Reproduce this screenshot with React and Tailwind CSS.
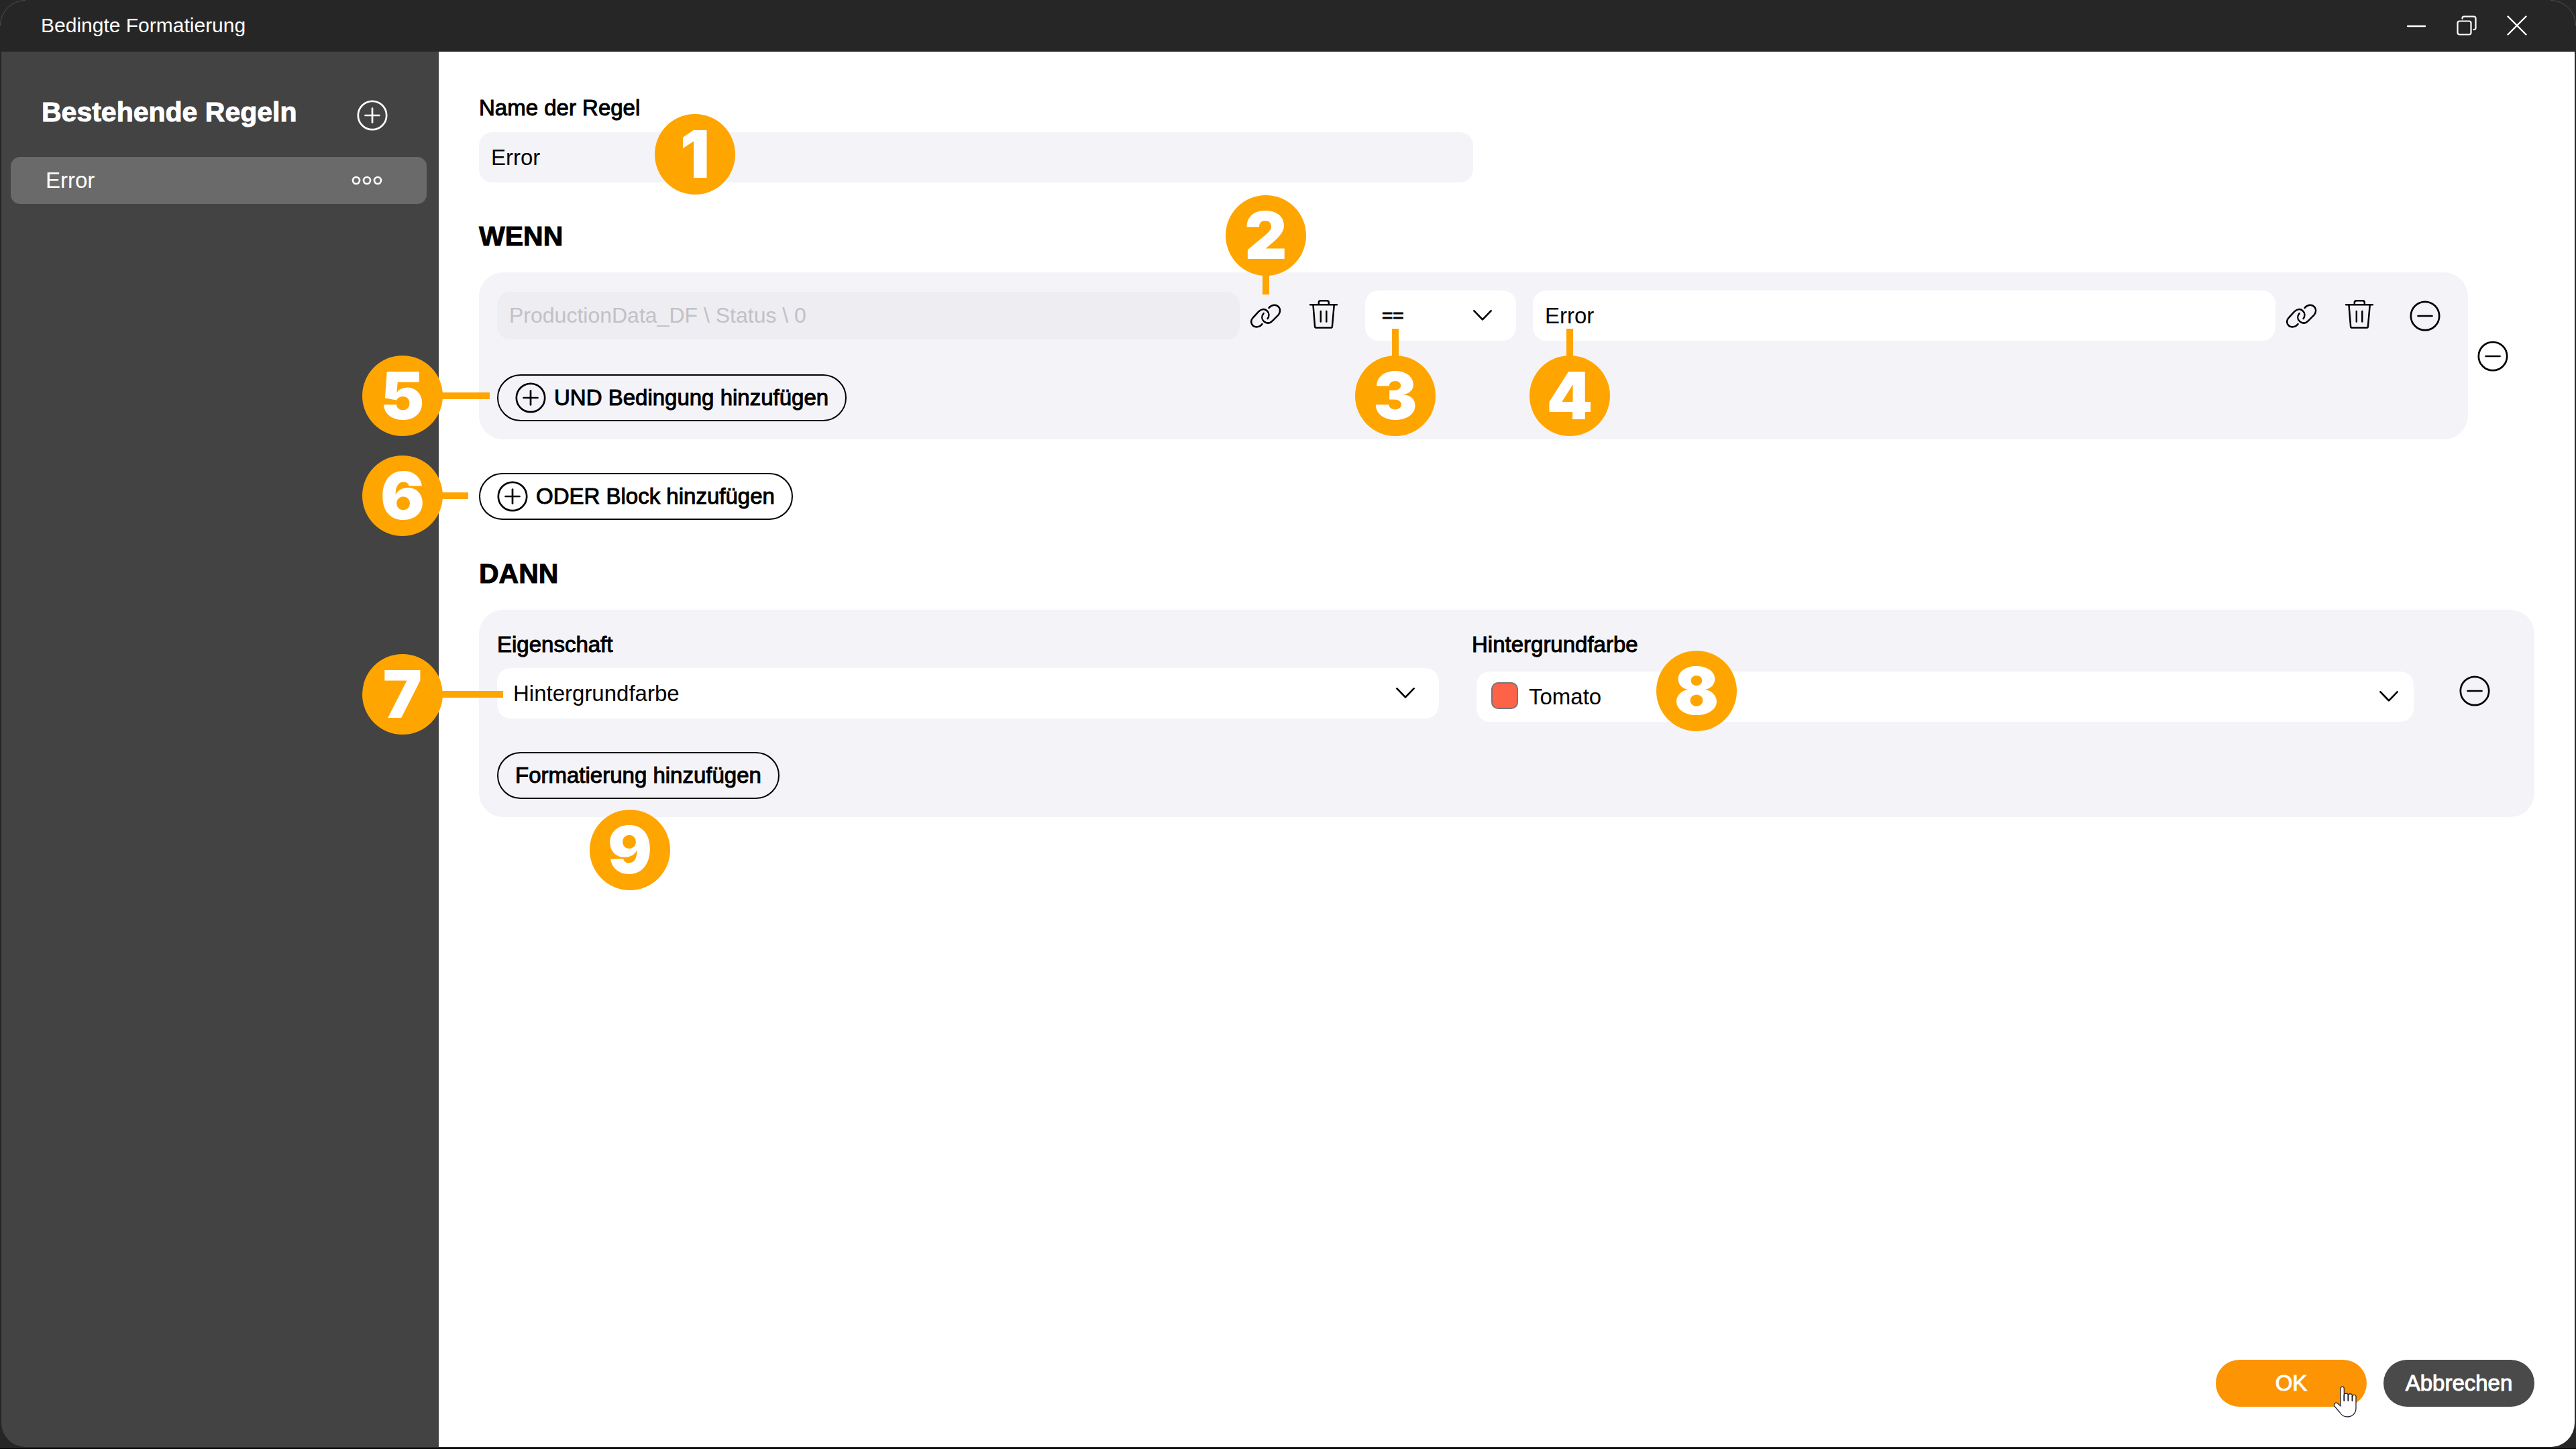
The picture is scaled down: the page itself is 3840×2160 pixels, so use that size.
import React from "react";

const FONT = "font-['Liberation_Sans',Arial,sans-serif]";
const MEDIUM = "text-[33px] leading-10 [-webkit-text-stroke:1px]";
const HEADING = "text-[41px] leading-12 font-bold [-webkit-text-stroke:1px]";
const FIELD = "h-[75px] w-full rounded-[20px] text-[33px] text-black outline-none";

function Badge({ n, className, stem }) {
  return (
    <div className={`pointer-events-none absolute z-10 size-[120px] ${className}`}>
      {stem && <span className={`absolute bg-[#ffa500] ${stem}`} />}
      <span className="relative flex size-full items-center justify-center rounded-full bg-[#ffa500] font-[Inter,sans-serif] text-[98px] leading-none font-black text-white">
        {n}
      </span>
    </div>
  );
}

function CircleIcon({ plus }) {
  return (
    <svg viewBox="0 0 46 46" className="size-[46px] shrink-0" fill="none" stroke="currentColor" strokeWidth="2.7" strokeLinecap="round" aria-hidden="true">
      <circle cx="23" cy="23" r="21.2" />
      <path d="M12.5 23H33.5" />
      {plus && <path d="M23 12.5V33.5" />}
    </svg>
  );
}

function LinkIcon() {
  return (
    <svg viewBox="0 -5 46 46" className="size-[46px]" fill="none" stroke="currentColor" strokeWidth="2.5" strokeLinecap="round" aria-hidden="true">
      <path d="M17.5 30C13.5 35.3 6.2 35.8 3 31.6C0.6 28.2 0.9 24 3.6 20.8L12 11.6C16 7.5 21 7 24.6 10.2C28 13.3 28.3 18 25.6 22" />
      <path d="M27.5 6C31.5 0.8 38.5 0.2 42.2 4.6C45 8 44.6 13 41.7 16.3L33 25.2C29 29.2 24.4 29.5 20.5 26.6C16.6 23.4 16.2 18.4 19.7 14" />
    </svg>
  );
}

function TrashIcon() {
  return (
    <svg viewBox="-2 1 46 46" className="size-[46px] overflow-visible" fill="none" stroke="currentColor" strokeWidth="2.5" strokeLinecap="round" strokeLinejoin="round" aria-hidden="true">
      <path d="M1.2 7.2H40.8" />
      <path d="M13.8 6.5V4C13.8 2 14.8 1.2 16.6 1.2H26C27.8 1.2 28.8 2 28.8 4V6.5" />
      <path d="M5.5 8L8.1 39.6C8.2 41 8.9 41.6 10.2 41.6H31.8C33.1 41.6 33.8 41 33.9 39.6L36.7 8" />
      <path d="M16.8 17V32.5M25.3 17V32.5" />
    </svg>
  );
}

function Chevron({ className }) {
  return (
    <svg viewBox="0 0 28 16" className={`pointer-events-none absolute h-4 w-7 ${className}`} fill="none" stroke="currentColor" strokeWidth="2.7" strokeLinecap="round" strokeLinejoin="round" aria-hidden="true">
      <path d="M1.4 1.4L14 14.4L26.6 1.4" />
    </svg>
  );
}

function IconButton({ label, className = "", children }) {
  return (
    <button type="button" aria-label={label} className={`size-[46px] shrink-0 ${className}`}>
      {children}
    </button>
  );
}

function OutlineButton({ plus, children }) {
  return (
    <button type="button" className={`flex h-[70px] items-center gap-3 rounded-full border-2 border-black px-[25px] whitespace-nowrap text-black ${MEDIUM}`}>
      {plus && <CircleIcon plus />}
      {children}
    </button>
  );
}

function HandCursor() {
  return (
    <svg viewBox="-1 -1 36 48" className="pointer-events-none absolute top-[39px] right-[14px] h-12 w-9" fill="#fff" stroke="#23233a" strokeWidth="1.3" strokeLinecap="round" strokeLinejoin="round" aria-hidden="true">
      <path d="M10 29V3A2.6 2.8 0 0 1 15.3 3V13A3 2.8 0 0 1 21.4 13A3 2.8 0 0 1 27.5 14.5A2.8 2.6 0 0 1 33 15.5V32C33 40 27.5 45 20 45C14.5 45 11 42 8.6 38L1.2 29.5C-1 26 2.5 22.5 6 25.2Z" />
      <path d="M15.3 13V21M21.4 13V21M27.5 14V21" strokeWidth="2" />
    </svg>
  );
}

function TitleBar() {
  return (
    <header className="flex h-[77px] shrink-0 items-center justify-between pr-[73px] pb-0.5 pl-[61px] text-white">
      <h1 className="text-[30px] leading-10">Bedingte Formatierung</h1>
      <div className="flex items-center gap-[45px]">
        <button type="button" aria-label="Minimieren">
          <svg viewBox="0 0 30 30" className="size-[30px]" stroke="currentColor" strokeWidth="2.4" strokeLinecap="round">
            <path d="M2 16H28" />
          </svg>
        </button>
        <button type="button" aria-label="Wiederherstellen">
          <svg viewBox="0 0 30 30" className="size-[30px]" fill="none" stroke="currentColor" strokeWidth="2.2" strokeLinecap="round">
            <rect x="1.5" y="8.5" width="20" height="20" rx="3" />
            <path d="M8.5 4.8V4.2C8.5 2.5 9.5 1.6 11 1.6H25.5C27.5 1.6 28.5 2.6 28.5 4.5V18.5C28.5 20.3 27.5 21.2 25.5 21.2" />
          </svg>
        </button>
        <button type="button" aria-label="Schließen">
          <svg viewBox="0 0 30 30" className="size-[30px]" stroke="currentColor" strokeWidth="2.4" strokeLinecap="round">
            <path d="M1.5 1.5L28.5 28.5M28.5 1.5L1.5 28.5" />
          </svg>
        </button>
      </div>
    </header>
  );
}

function Sidebar() {
  return (
    <aside className="w-[652px] shrink-0 rounded-bl-[36px] bg-[#434343] pt-[66px] text-white">
      <div className="flex h-[52px] items-end justify-between pr-[76px] pl-[60px]">
        <h2 className={`self-start ${HEADING}`}>Bestehende Regeln</h2>
        <IconButton label="Regel hinzufügen">
          <CircleIcon plus />
        </IconButton>
      </div>
      <ul className="mt-[39px] mr-[18px] ml-[14px]">
        <li className="flex h-[70px] items-center justify-between rounded-[14px] bg-[#6a6a6a] pr-[66px] pl-[52px]">
          <span className="text-[33px] leading-10">Error</span>
          <button type="button" aria-label="Weitere Aktionen">
            <svg viewBox="0 0 46 14" className="h-3.5 w-[46px]" fill="none" stroke="currentColor" strokeWidth="2.7">
              <circle cx="7" cy="7" r="5" />
              <circle cx="23" cy="7" r="5" />
              <circle cx="39" cy="7" r="5" />
            </svg>
          </button>
        </li>
      </ul>
    </aside>
  );
}

function WhenBlock() {
  return (
    <div className="mt-[30px] flex items-center gap-3.5 pr-[39px]">
      <div className="min-w-0 flex-1 rounded-[36px] bg-[#f4f3f8] py-[27px] pr-[41px] pl-[27px]">
        <div className="flex items-center">
          <div className="min-w-0 flex-1">
            <input
              disabled
              aria-label="Datenquelle"
              defaultValue="ProductionData_DF \ Status \ 0"
              className="block h-[71px] w-full rounded-[20px] bg-[#eeedf2] px-[18px] text-[32px] text-[#c2c1c5]"
            />
          </div>
          <div className="relative ml-4 flex gap-10">
            <IconButton label="Verknüpfen"><LinkIcon /></IconButton>
            <IconButton label="Löschen"><TrashIcon /></IconButton>
            <Badge n="2" className="bottom-[83px] -left-[37px]" stem="top-[118px] left-[55px] h-[30px] w-2.5" />
          </div>
          <div className="relative mr-[25px] ml-[39px] w-[225px]">
            <select aria-label="Operator" className="block h-[75px] w-full appearance-none rounded-[20px] bg-white px-[25px] text-[28px] [-webkit-text-stroke:1px]">
              <option>==</option>
            </select>
            <Chevron className="top-[29px] right-[36px]" />
            <Badge n="3" className="top-[97px] -left-[15px]" stem="bottom-[118px] left-[55px] h-[42px] w-2.5" />
          </div>
          <div className="relative min-w-0 flex-1">
            <input aria-label="Vergleichswert" defaultValue="Error" className={`block ${FIELD} bg-white px-[18px]`} />
            <Badge n="4" className="top-[97px] -left-[5px]" stem="bottom-[118px] left-[55px] h-[42px] w-2.5" />
          </div>
          <div className="ml-4 flex gap-10">
            <IconButton label="Verknüpfen"><LinkIcon /></IconButton>
            <IconButton label="Löschen"><TrashIcon /></IconButton>
          </div>
          <IconButton label="Bedingung entfernen" className="ml-[52px]"><CircleIcon /></IconButton>
        </div>
        <div className="relative mt-[50px] w-fit">
          <OutlineButton plus>UND Bedingung hinzufügen</OutlineButton>
          <Badge n="5" className="-top-[28px] right-full mr-[81px]" stem="top-[55px] left-[118px] h-2.5 w-[72px]" />
        </div>
      </div>
      <IconButton label="Block entfernen"><CircleIcon /></IconButton>
    </div>
  );
}

function ThenBlock() {
  return (
    <div className="mt-[30px] rounded-[36px] bg-[#f4f3f8] pt-8 pr-[66px] pb-[27px] pl-[27px]">
      <div className="flex">
        <div className="min-w-0 flex-1">
          <label htmlFor="property" className={`block ${MEDIUM}`}>Eigenschaft</label>
          <div className="relative mt-[15px]">
            <select id="property" className={`block ${FIELD} appearance-none bg-white px-6`}>
              <option>Hintergrundfarbe</option>
            </select>
            <Chevron className="top-[29px] right-[36px]" />
            <Badge n="7" className="-top-[21px] right-full mr-[81px]" stem="top-[55px] left-[118px] h-2.5 w-[92px]" />
          </div>
        </div>
        <div className="ml-[49px] min-w-0 flex-1">
          <label htmlFor="color" className={`block ${MEDIUM}`}>Hintergrundfarbe</label>
          <div className="relative mt-5 ml-[7px]">
            <select id="color" className={`block ${FIELD} appearance-none bg-white pr-6 pl-[78px]`}>
              <option>Tomato</option>
            </select>
            <span className="pointer-events-none absolute top-4 left-[22px] size-10 rounded-[10px] border-2 border-[#777] bg-[#ff6347]" />
            <Chevron className="top-[29px] right-[23px]" />
            <Badge n="8" className="-top-[31px] left-[268px]" />
          </div>
        </div>
        <IconButton label="Formatierung entfernen" className="mb-[23px] ml-[68px] self-end"><CircleIcon /></IconButton>
      </div>
      <div className="relative mt-[45px] w-fit">
        <OutlineButton>Formatierung hinzufügen</OutlineButton>
        <Badge n="9" className="top-[86px] left-[138px]" />
      </div>
    </div>
  );
}

export default function App() {
  return (
    <div className={`relative flex min-h-screen flex-col border-b border-black bg-[#262626] text-black ${FONT}`}>
      <svg viewBox="0 0 38 38" className="pointer-events-none absolute top-0 left-0 size-[38px]" fill="none" stroke="#505050" aria-hidden="true">
        <path d="M0.5 38A37.5 37.5 0 0 1 38 0.5" />
      </svg>
      <svg viewBox="0 0 38 38" className="pointer-events-none absolute top-0 right-0 size-[38px]" fill="none" stroke="#505050" aria-hidden="true">
        <path d="M37.5 38A37.5 37.5 0 0 0 0 0.5" />
      </svg>
      <TitleBar />
      <div className="mx-0.5 mb-0.5 flex flex-1">
        <Sidebar />
        <main className="flex min-w-0 flex-1 flex-col rounded-br-[36px] bg-white px-[60px] pt-16 pb-[60px]">
          <label htmlFor="rule-name" className={`w-fit ${MEDIUM}`}>Name der Regel</label>
          <div className="relative mt-4 max-w-[1482px]">
            <input id="rule-name" defaultValue="Error" className={`block ${FIELD} bg-[#f4f3f8] px-[18px]`} />
            <Badge n="1" className="-top-[27px] left-[262px]" />
          </div>

          <h2 className={`mt-14 ${HEADING}`}>WENN</h2>
          <WhenBlock />
          <div className="relative mt-[50px] w-fit">
            <OutlineButton plus>ODER Block hinzufügen</OutlineButton>
            <Badge n="6" className="-top-[26px] right-full mr-[54px]" stem="top-[55px] left-[118px] h-2.5 w-10" />
          </div>

          <h2 className={`mt-14 ${HEADING}`}>DANN</h2>
          <ThenBlock />

          <footer className="mt-auto flex justify-end gap-[25px] pt-16">
            <div className="relative">
              <button type="button" className={`h-[70px] w-[225px] rounded-full bg-[#fc9403] text-white ${MEDIUM}`}>OK</button>
              <HandCursor />
            </div>
            <button type="button" className={`h-[70px] w-[225px] rounded-full bg-[#4a4a4a] text-white ${MEDIUM}`}>Abbrechen</button>
          </footer>
        </main>
      </div>
    </div>
  );
}
